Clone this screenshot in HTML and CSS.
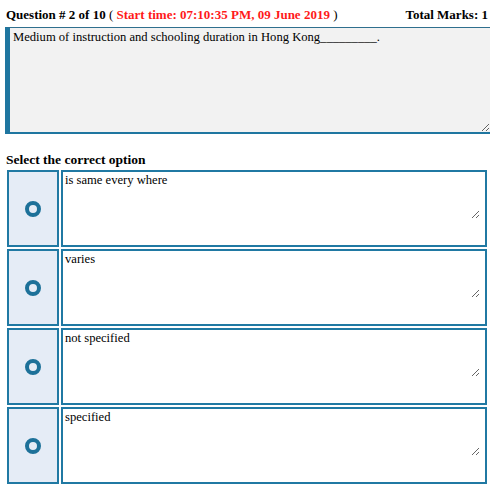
FILE: index.html
```html
<!DOCTYPE html>
<html>
<head>
<meta charset="utf-8">
<link rel="stylesheet" href="styles.css">
</head>
<body>
<div class="page">
  <div class="qhead">
    <div class="qtitle">Question # 2 of 10 <span class="paren">(</span> <span class="start">Start time: 07:10:35 PM, 09 June 2019</span> <span class="paren">)</span></div>
    <div class="marks">Total Marks: 1</div>
  </div>
  <textarea class="question" readonly>Medium of instruction and schooling duration in Hong Kong_________.</textarea>
  <div class="select">Select the correct option</div>
  <div class="options">
    <div class="opt">
      <div class="radio"><span class="ring"></span></div>
      <div class="cell"><textarea class="answer" readonly>is same every where</textarea></div>
    </div>
    <div class="opt">
      <div class="radio"><span class="ring"></span></div>
      <div class="cell"><textarea class="answer" readonly>varies</textarea></div>
    </div>
    <div class="opt">
      <div class="radio"><span class="ring"></span></div>
      <div class="cell"><textarea class="answer" readonly>not specified</textarea></div>
    </div>
    <div class="opt">
      <div class="radio"><span class="ring"></span></div>
      <div class="cell"><textarea class="answer" readonly>specified</textarea></div>
    </div>
  </div>
</div>
</body>
</html>
```

FILE: styles.css
```css
html, body {
  margin: 0;
  padding: 0;
  background: #ffffff;
  overflow: hidden;
}
.page {
  font-family: "Liberation Serif", "Times New Roman", serif;
  color: #000;
  padding-top: 6px;
}
.qhead {
  display: flex;
  justify-content: space-between;
  padding-left: 6px;
  padding-right: 2px;
  font-size: 13px;
  font-weight: bold;
  height: 21px;
  line-height: 18px;
}
.paren { font-weight: normal; }
.start { color: #ff1a1a; }
.question {
  display: block;
  box-sizing: border-box;
  margin: 0 0 0 5px;
  width: 485px;
  height: 107px;
  background: #f2f2f2;
  border: none;
  border-top: 1px solid #2f6f8e;
  border-left: 5px solid #1f76a0;
  border-bottom: 2px solid #1f76a0;
  padding: 2px 3px;
  font-family: "Liberation Serif", "Times New Roman", serif;
  font-size: 12.6px;
  color: #000;
  resize: both;
  outline: none;
}
.select {
  font-size: 13.5px;
  font-weight: bold;
  padding-left: 6px;
  margin-top: 17px;
  line-height: 18px;
}
.options {
  display: flex;
  flex-direction: column;
  gap: 2px;
  margin: 1px 0 0 7px;
  width: 480px;
}
.opt {
  display: flex;
  gap: 2px;
  height: 77px;
}
.radio {
  box-sizing: border-box;
  width: 52px;
  flex: none;
  background: #e5ecf6;
  border: 2px solid #2079a3;
  display: flex;
  align-items: center;
  justify-content: center;
}
.ring {
  box-sizing: border-box;
  width: 16px;
  height: 16px;
  border-radius: 50%;
  border: 4px solid #1d7199;
}
.cell {
  box-sizing: border-box;
  flex: 1;
  border: 2px solid #2079a3;
  background: #fff;
  padding: 1px 5px 0 1px;
}
.answer {
  display: block;
  box-sizing: border-box;
  width: 100%;
  height: 46px;
  border: none;
  background: #fff;
  padding: 0 1px;
  font-family: "Liberation Serif", "Times New Roman", serif;
  font-size: 12.6px;
  color: #000;
  resize: both;
  outline: none;
  margin: 0;
}
```
